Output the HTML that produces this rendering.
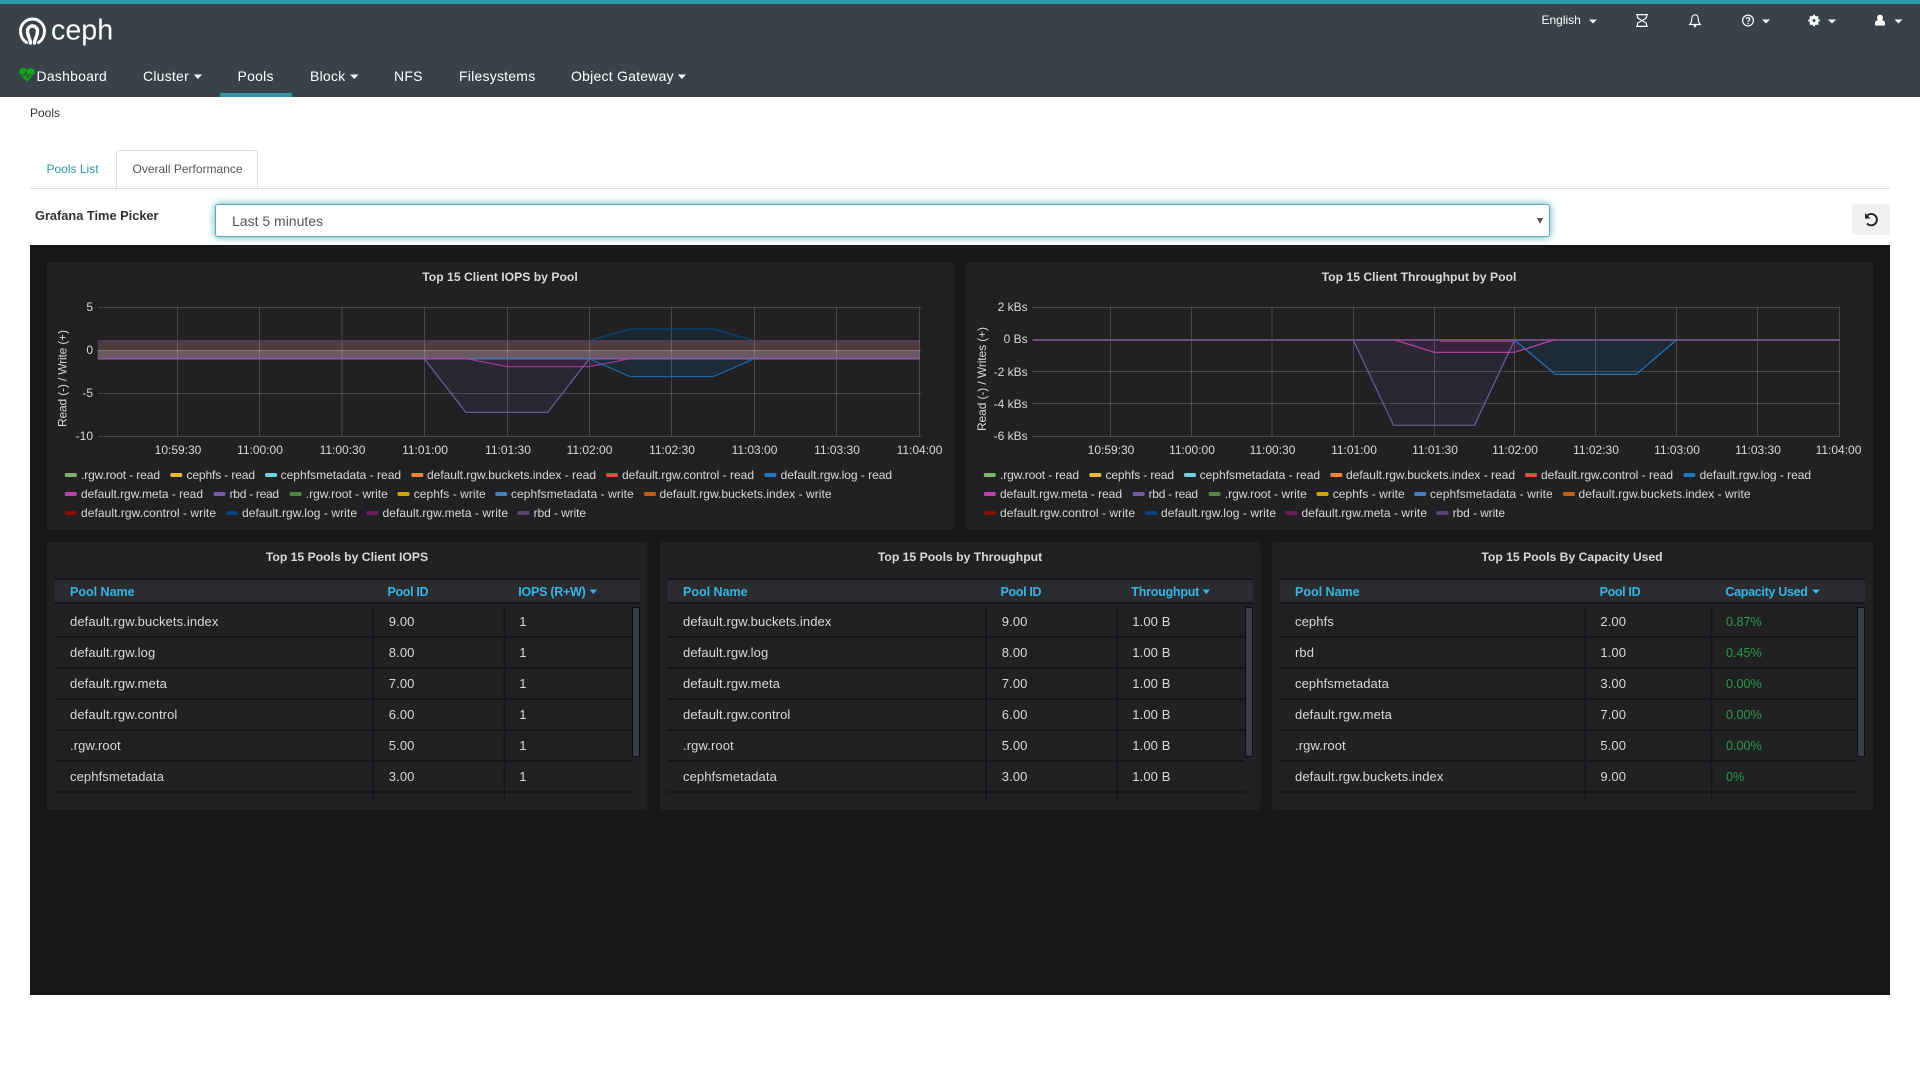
<!DOCTYPE html>
<html lang="en">
<head>
<meta charset="utf-8">
<title>Ceph Pools</title>
<style>
html,body{margin:0;padding:0;width:1920px;height:1080px;overflow:hidden;background:#fff;font-family:"Liberation Sans",sans-serif;color:#333}
#top{position:absolute;left:0;top:0;width:1920px;height:93px;background:#374249;border-top:4px solid #2b99a8}
.n{position:absolute;top:66px;font-size:14px;line-height:20px;color:#fff;white-space:nowrap;letter-spacing:.23px}
#act{position:absolute;left:220px;top:93px;width:72px;height:4px;background:#2b99a8}
.t{position:absolute;white-space:nowrap}
#tab{position:absolute;left:116px;top:150px;width:142px;height:38px;box-sizing:border-box;border:1px solid #ddd;border-bottom:0;border-radius:3px 3px 0 0;background:#fff}
#tabline{position:absolute;left:30px;top:188px;width:1860px;height:1px;background:#ddd}
#sel{position:absolute;left:215px;top:204px;width:1335px;height:33px;box-sizing:border-box;border:1px solid #5fa9b5;border-radius:3px;background:#fff;box-shadow:0 0 8px rgba(43,153,168,.8);font-size:14px;color:#555;line-height:32px;padding-left:16px}
#btn{position:absolute;left:1852px;top:204px;width:38px;height:31px;background:#f0f0f0;border-radius:3px}
#dark{position:absolute;left:30px;top:245px;width:1860px;height:750px;background:#161719}
svg{position:absolute;left:0;top:0}
svg text{font-family:"Liberation Sans",sans-serif;fill:#d8d9da;font-size:12px}
svg .ttl{font-weight:700;text-anchor:middle;font-size:12.2px}
.xl text{text-anchor:middle}
.yl text{text-anchor:end}
svg .h text{font-weight:700;font-size:12.5px;fill:#33b5e5}
svg .r text{font-size:13px;letter-spacing:.1px}
svg .g text{fill:#299c46;font-size:12.6px;letter-spacing:0}
</style>
</head>
<body>
<div id="top"></div>
<div class="n" style="left:36.5px">Dashboard</div>
<div class="n" style="left:143px">Cluster</div>
<div class="n" style="left:237.5px">Pools</div>
<div id="act"></div>
<div class="n" style="left:310px">Block</div>
<div class="n" style="left:394px">NFS</div>
<div class="n" style="left:459px">Filesystems</div>
<div class="n" style="left:571px">Object Gateway</div>
<div class="t" style="left:1541.5px;top:13px;font-size:12px;line-height:14px;color:#fff">English</div>
<div class="t" style="left:30px;top:106px;font-size:12px;line-height:14px;color:#333">Pools</div>
<div id="tab"></div>
<div id="tabline"></div>
<div class="t" style="left:46.5px;top:162px;font-size:12px;line-height:14px;color:#2b99a8">Pools List</div>
<div class="t" style="left:132.5px;top:162px;font-size:12px;line-height:14px;color:#555">Overall Performance</div>
<div class="t" style="left:35px;top:209px;font-size:12.8px;line-height:14px;font-weight:700;color:#333">Grafana Time Picker</div>
<div id="sel">Last 5 minutes</div>
<div id="btn"></div>
<div id="dark"></div>

<svg width="1920" height="1080" viewBox="0 0 1920 1080">
<!-- logo -->
<g fill="none" stroke="#fff" stroke-linecap="round">
<path stroke-width="2.9" d="M26.5 42.5C22.5 40 20.5 35.5 20.5 31A12 12 0 0 1 44.5 31C44.500 35.5 42.5 40 38.5 42.5"/>
<path stroke-width="3.4" d="M30.5 43C30.5 39 27.500 36.500 27.500 31A5 5 0 0 1 37.500 31C37.500 36.500 34.500 39 34.500 43"/>
</g>
<text x="51" y="39.5" style="font-size:28.700px;fill:#fff">ceph</text>
<!-- heart -->
<path d="M27 81.5L20.5 75C18.5 73 18.8 70 21 68.8C23 67.7 25.7 68 27 70.3C28.3 68 31 67.7 33 68.8C35.2 70 35.500 73 33.500 75Z" fill="#12a51d"/>
<path d="M20 75H24.5L26 72L27.500 77.500L29 75H34" fill="none" stroke="#374249" stroke-width="1"/>
<!-- nav carets -->
<g fill="#fff">
<polygon points="193.800,74.500 202,74.500 197.900,79"/>
<polygon points="350,74.500 358.500,74.500 354.250,79"/>
<polygon points="677.800,74.500 686,74.500 681.900,79"/>
<polygon points="1589,19.500 1597,19.500 1593,23.500"/>
<polygon points="1762,19.500 1770,19.500 1766,23.500"/>
<polygon points="1828,19.500 1836,19.500 1832,23.500"/>
<polygon points="1894.500,19.500 1902.500,19.500 1898.500,23.500"/>
</g>
<!-- hourglass -->
<g fill="none" stroke="#fff" stroke-width="1.2">
<path d="M1636 14.600H1648M1636 26.400H1648M1637.500 15V17C1637.500 19 1641.500 19.500 1641.500 20.500C1641.500 21.500 1637.500 22 1637.500 24V26M1646.500 15V17C1646.500 19 1642.500 19.500 1642.500 20.500C1642.500 21.500 1646.500 22 1646.500 24V26"/>
<!-- bell -->
<path d="M1689.700 24.500C1691.500 22.500 1691.700 21 1691.700 19C1691.700 16.500 1693 14.800 1695 14.800C1697 14.800 1698.300 16.500 1698.300 19C1698.300 21 1698.500 22.500 1700.300 24.500Z"/>
<!-- question -->
<circle cx="1748" cy="20.500" r="5.400"/>
<path d="M1746.200 19C1746.500 17.300 1749.800 17.300 1749.800 19.200C1749.800 20.500 1748 20.500 1748 22"/>
</g>
<circle cx="1695" cy="26" r="1.300" fill="#fff"/>
<circle cx="1748" cy="23.500" r=".8" fill="#fff"/>
<!-- gear -->
<circle cx="1814" cy="20.500" r="4.700" fill="#fff"/>
<g stroke="#fff" stroke-width="2"><path d="M1814 14.800V26.200M1808.300 20.500H1819.700M1810 16.500L1818 24.500M1818 16.500L1810 24.500"/></g>
<circle cx="1814" cy="20.500" r="1.500" fill="#374249"/>
<!-- user -->
<circle cx="1880" cy="17.800" r="3" fill="#fff"/>
<path d="M1875 25.500V23.500C1875 21.300 1876.500 20.300 1878 20.300H1882C1883.500 20.300 1885 21.300 1885 23.500V25.500Z" fill="#fff"/>
<!-- select arrow -->
<polygon points="1537,218 1543,218 1540,224" fill="#555"/>
<!-- reset -->
<path d="M1867.500 215.300A5.700 5.700 0 1 1 1867 223.500" fill="none" stroke="#222" stroke-width="1.900"/>
<polygon points="1865,213 1870.500,218.500 1865,218.500" fill="#222"/>

<!-- panels -->
<g fill="#212124">
<rect x="47" y="262" width="907" height="268" rx="3"/>
<rect x="966" y="262" width="907" height="268" rx="3"/>
<rect x="47" y="542" width="600.500" height="268" rx="3"/>
<rect x="660" y="542" width="600.500" height="268" rx="3"/>
<rect x="1272" y="542" width="601" height="268" rx="3"/>
</g>

<!-- CHART 1 -->
<text class="ttl" x="500" y="281">Top 15 Client IOPS by Pool</text>
<polygon points="424.300,358.700 465.700,412.300 547.700,412.300 589.300,358.700" fill="#2a2733"/>
<polygon points="466.700,358.700 507.300,366.700 589.300,366.700 630.300,358.700" fill="#37233c"/>
<polygon points="589.300,358.700 630,376.700 713.300,376.700 754.300,358.700" fill="#1f2a38"/>
<polygon points="589.300,340.700 630,329 713.300,329 754.300,340.700" fill="#1a2530"/>
<rect x="97.700" y="341" width="822" height="9" fill="#4d3c3e"/>
<rect x="97.700" y="350" width="822" height="8.700" fill="#6a5860"/>
<g fill="none" stroke="rgba(255,255,255,.17)" stroke-width="1">
<path d="M97.700 307.500H921.500M97.700 350.500H921.500M97.700 393.500H921.500M97.700 436.500H921.500"/>
<path d="M177.500 307V436M259.500 307V436M342 307V436M424.500 307V436M507.500 307V436M589.500 307V436M671.500 307V436M754.500 307V436M836.500 307V436M919.500 307V436"/>
</g>
<polyline points="589.300,340.700 630,329 713.300,329 754.300,340.700" fill="none" stroke="#0a437c" stroke-width="1.200"/>
<path d="M97.700 341H919.700" stroke="#5a4060" stroke-width="1.500"/>
<path d="M97.700 358.700H919.700" stroke="#8a5ba8" stroke-width="1.600"/>
<path d="M466 358.700H589" stroke="#3f78b8" stroke-width="1.600"/>
<polyline points="424.300,358.700 465.700,412.300 547.700,412.300 589.300,358.700" fill="none" stroke="#705da0" stroke-width="1.200"/>
<polyline points="424.300,358.700 466.700,358.700 507.300,366.700 589.300,366.700 630.300,358.700" fill="none" stroke="#ba43a9" stroke-width="1.200" opacity=".8"/>
<polyline points="589.300,358.700 630,376.700 713.300,376.700 754.300,358.700" fill="none" stroke="#1f78c1" stroke-width="1.200" opacity=".8"/>
<g class="yl">
<text x="93" y="311">5</text><text x="93" y="354">0</text><text x="93" y="397">-5</text><text x="93" y="440">-10</text>
</g>
<g class="xl">
<text x="178" y="454">10:59:30</text><text x="260" y="454">11:00:00</text><text x="342.500" y="454">11:00:30</text><text x="425" y="454">11:01:00</text><text x="508" y="454">11:01:30</text><text x="589.500" y="454">11:02:00</text><text x="672" y="454">11:02:30</text><text x="754.500" y="454">11:03:00</text><text x="837" y="454">11:03:30</text><text x="919.500" y="454" >11:04:00</text>
</g>
<text transform="translate(66.500 427) rotate(-90)" textLength="97">Read (-) / Write (+)</text>
<g>
<rect x="64.800" y="473" width="12" height="4" rx="1.500" fill="#7eb26d"/><text x="81" y="479" textLength="79">.rgw.root - read</text>
<rect x="170.300" y="473" width="12" height="4" rx="1.500" fill="#eab839"/><text x="186.500" y="479" textLength="68.500">cephfs - read</text>
<rect x="265" y="473" width="12" height="4" rx="1.500" fill="#6ed0e0"/><text x="280.600" y="479" textLength="120.500">cephfsmetadata - read</text>
<rect x="411.300" y="473" width="12" height="4" rx="1.500" fill="#ef843c"/><text x="427" y="479" textLength="169">default.rgw.buckets.index - read</text>
<rect x="606" y="473" width="12" height="4" rx="1.500" fill="#e24d42"/><text x="622" y="479" textLength="132">default.rgw.control - read</text>
<rect x="764.400" y="473" width="12" height="4" rx="1.500" fill="#1f78c1"/><text x="780.600" y="479" textLength="111.500">default.rgw.log - read</text>
<rect x="64.800" y="492" width="12" height="4" rx="1.500" fill="#ba43a9"/><text x="81" y="498" textLength="122">default.rgw.meta - read</text>
<rect x="213.500" y="492" width="12" height="4" rx="1.500" fill="#705da0"/><text x="229.600" y="498" textLength="49.500">rbd - read</text>
<rect x="289.600" y="492" width="12" height="4" rx="1.500" fill="#508642"/><text x="305.800" y="498" textLength="82">.rgw.root - write</text>
<rect x="397.500" y="492" width="12" height="4" rx="1.500" fill="#cca300"/><text x="413.700" y="498" textLength="72">cephfs - write</text>
<rect x="495.200" y="492" width="12" height="4" rx="1.500" fill="#447ebc"/><text x="511" y="498" textLength="122.700">cephfsmetadata - write</text>
<rect x="644" y="492" width="12" height="4" rx="1.500" fill="#c15c17"/><text x="659.500" y="498" textLength="172">default.rgw.buckets.index - write</text>
<rect x="64.800" y="511" width="12" height="4" rx="1.500" fill="#890f02"/><text x="81" y="517" textLength="135">default.rgw.control - write</text>
<rect x="226" y="511" width="12" height="4" rx="1.500" fill="#0a437c"/><text x="242" y="517" textLength="115">default.rgw.log - write</text>
<rect x="366.300" y="511" width="12" height="4" rx="1.500" fill="#6d1f62"/><text x="382.500" y="517" textLength="125.500">default.rgw.meta - write</text>
<rect x="517.400" y="511" width="12" height="4" rx="1.500" fill="#584477"/><text x="533.600" y="517" textLength="52.500">rbd - write</text>
</g>

<!-- CHART 2 -->
<text class="ttl" x="1419" y="281">Top 15 Client Throughput by Pool</text>
<polygon points="1353.300,340 1393.500,425.300 1474.400,425.300 1514.600,340" fill="#2a2733"/>
<polygon points="1395,340 1434.200,352.300 1514.600,352.300 1553.500,340" fill="#37233c"/>
<polygon points="1514.600,340 1555.300,374.300 1636.300,374.300 1676.400,340" fill="#1f2a38"/>
<g fill="none" stroke="rgba(255,255,255,.17)" stroke-width="1">
<path d="M1032.500 307.500H1840.700M1032.500 339.500H1840.700M1032.500 371.500H1840.700M1032.500 403.500H1840.700M1032.500 436.500H1840.700"/>
<path d="M1110.500 307V436M1191.500 307V436M1272 307V436M1353.500 307V436M1434.500 307V436M1514.500 307V436M1595.500 307V436M1676.500 307V436M1757.500 307V436M1839.500 307V436"/>
</g>
<path d="M1032.500 340H1839.500" stroke="#6f4a7d" stroke-width="2"/>
<path d="M1440 341.500H1515" stroke="#c15c17" stroke-width="1" opacity=".6"/>
<polyline points="1353.300,340 1393.500,425.300 1474.400,425.300 1514.600,340" fill="none" stroke="#705da0" stroke-width="1.200"/>
<polyline points="1395,340 1434.200,352.300 1514.600,352.300 1553.500,340" fill="none" stroke="#ba43a9" stroke-width="1.200"/>
<polyline points="1514.600,340 1555.300,374.300 1636.300,374.300 1676.400,340" fill="none" stroke="#1f78c1" stroke-width="1.200"/>
<g class="yl">
<text x="1027.700" y="311">2 kBs</text><text x="1027.700" y="343">0 Bs</text><text x="1027.700" y="376">-2 kBs</text><text x="1027.700" y="408">-4 kBs</text><text x="1027.700" y="440">-6 kBs</text>
</g>
<g class="xl">
<text x="1111" y="454">10:59:30</text><text x="1192" y="454">11:00:00</text><text x="1272.500" y="454">11:00:30</text><text x="1354" y="454">11:01:00</text><text x="1435" y="454">11:01:30</text><text x="1515" y="454">11:02:00</text><text x="1596" y="454">11:02:30</text><text x="1677" y="454">11:03:00</text><text x="1758" y="454">11:03:30</text><text x="1838.500" y="454">11:04:00</text>
</g>
<text transform="translate(986 431) rotate(-90)" textLength="104">Read (-) / Writes (+)</text>
<g transform="translate(919 0)">
<rect x="64.800" y="473" width="12" height="4" rx="1.500" fill="#7eb26d"/><text x="81" y="479" textLength="79">.rgw.root - read</text>
<rect x="170.300" y="473" width="12" height="4" rx="1.500" fill="#eab839"/><text x="186.500" y="479" textLength="68.500">cephfs - read</text>
<rect x="265" y="473" width="12" height="4" rx="1.500" fill="#6ed0e0"/><text x="280.600" y="479" textLength="120.500">cephfsmetadata - read</text>
<rect x="411.300" y="473" width="12" height="4" rx="1.500" fill="#ef843c"/><text x="427" y="479" textLength="169">default.rgw.buckets.index - read</text>
<rect x="606" y="473" width="12" height="4" rx="1.500" fill="#e24d42"/><text x="622" y="479" textLength="132">default.rgw.control - read</text>
<rect x="764.400" y="473" width="12" height="4" rx="1.500" fill="#1f78c1"/><text x="780.600" y="479" textLength="111.500">default.rgw.log - read</text>
<rect x="64.800" y="492" width="12" height="4" rx="1.500" fill="#ba43a9"/><text x="81" y="498" textLength="122">default.rgw.meta - read</text>
<rect x="213.500" y="492" width="12" height="4" rx="1.500" fill="#705da0"/><text x="229.600" y="498" textLength="49.500">rbd - read</text>
<rect x="289.600" y="492" width="12" height="4" rx="1.500" fill="#508642"/><text x="305.800" y="498" textLength="82">.rgw.root - write</text>
<rect x="397.500" y="492" width="12" height="4" rx="1.500" fill="#cca300"/><text x="413.700" y="498" textLength="72">cephfs - write</text>
<rect x="495.200" y="492" width="12" height="4" rx="1.500" fill="#447ebc"/><text x="511" y="498" textLength="122.700">cephfsmetadata - write</text>
<rect x="644" y="492" width="12" height="4" rx="1.500" fill="#c15c17"/><text x="659.500" y="498" textLength="172">default.rgw.buckets.index - write</text>
<rect x="64.800" y="511" width="12" height="4" rx="1.500" fill="#890f02"/><text x="81" y="517" textLength="135">default.rgw.control - write</text>
<rect x="226" y="511" width="12" height="4" rx="1.500" fill="#0a437c"/><text x="242" y="517" textLength="115">default.rgw.log - write</text>
<rect x="366.300" y="511" width="12" height="4" rx="1.500" fill="#6d1f62"/><text x="382.500" y="517" textLength="125.500">default.rgw.meta - write</text>
<rect x="517.400" y="511" width="12" height="4" rx="1.500" fill="#584477"/><text x="533.600" y="517" textLength="52.500">rbd - write</text>
</g>

<!-- TABLE 1 -->
<g>
<text class="ttl" x="347" y="561">Top 15 Pools by Client IOPS</text>
<rect x="54.500" y="578" width="585.500" height="26" fill="#141619"/><rect x="54.500" y="580" width="585.500" height="22" fill="#2b2c2f"/>
<g class="h"><text x="70" y="596">Pool Name</text><text x="387.500" y="596" textLength="41">Pool ID</text><text x="518.300" y="596" textLength="67.500">IOPS (R+W)</text></g>
<polygon points="589.500,589.500 597,589.500 593.250,594" fill="#33b5e5"/>
<g fill="#141619">
<rect x="54.500" y="636" width="577.500" height="2"/><rect x="54.500" y="667" width="577.500" height="2"/><rect x="54.500" y="698" width="577.500" height="2"/><rect x="54.500" y="729" width="577.500" height="2"/><rect x="54.500" y="760" width="577.500" height="2"/><rect x="54.500" y="791" width="577.500" height="2"/>
<rect x="372" y="607" width="2" height="193"/><rect x="503.500" y="607" width="2" height="193"/>
</g>
<rect x="632.500" y="607.500" width="7" height="149" fill="#3b3d45" stroke="#0d0d0f"/>
<g class="r">
<text x="70" y="626">default.rgw.buckets.index</text><text x="388.800" y="626">9.00</text><text x="519.300" y="626">1</text>
<text x="70" y="657">default.rgw.log</text><text x="388.800" y="657">8.00</text><text x="519.300" y="657">1</text>
<text x="70" y="688">default.rgw.meta</text><text x="388.800" y="688">7.00</text><text x="519.300" y="688">1</text>
<text x="70" y="719">default.rgw.control</text><text x="388.800" y="719">6.00</text><text x="519.300" y="719">1</text>
<text x="70" y="750">.rgw.root</text><text x="388.800" y="750">5.00</text><text x="519.300" y="750">1</text>
<text x="70" y="781">cephfsmetadata</text><text x="388.800" y="781">3.00</text><text x="519.300" y="781">1</text>
</g>
</g>

<!-- TABLE 2 -->
<g transform="translate(613 0)">
<text class="ttl" x="347" y="561">Top 15 Pools by Throughput</text>
<rect x="54.500" y="578" width="585.500" height="26" fill="#141619"/><rect x="54.500" y="580" width="585.500" height="22" fill="#2b2c2f"/>
<g class="h"><text x="70" y="596">Pool Name</text><text x="387.500" y="596" textLength="41">Pool ID</text><text x="518.300" y="596" textLength="68">Throughput</text></g>
<polygon points="589.500,589.500 597,589.500 593.250,594" fill="#33b5e5"/>
<g fill="#141619">
<rect x="54.500" y="636" width="577.500" height="2"/><rect x="54.500" y="667" width="577.500" height="2"/><rect x="54.500" y="698" width="577.500" height="2"/><rect x="54.500" y="729" width="577.500" height="2"/><rect x="54.500" y="760" width="577.500" height="2"/><rect x="54.500" y="791" width="577.500" height="2"/>
<rect x="372" y="607" width="2" height="193"/><rect x="503.500" y="607" width="2" height="193"/>
</g>
<rect x="632.500" y="607.500" width="7" height="149" fill="#3b3d45" stroke="#0d0d0f"/>
<g class="r">
<text x="70" y="626">default.rgw.buckets.index</text><text x="388.800" y="626">9.00</text><text x="519.300" y="626">1.00 B</text>
<text x="70" y="657">default.rgw.log</text><text x="388.800" y="657">8.00</text><text x="519.300" y="657">1.00 B</text>
<text x="70" y="688">default.rgw.meta</text><text x="388.800" y="688">7.00</text><text x="519.300" y="688">1.00 B</text>
<text x="70" y="719">default.rgw.control</text><text x="388.800" y="719">6.00</text><text x="519.300" y="719">1.00 B</text>
<text x="70" y="750">.rgw.root</text><text x="388.800" y="750">5.00</text><text x="519.300" y="750">1.00 B</text>
<text x="70" y="781">cephfsmetadata</text><text x="388.800" y="781">3.00</text><text x="519.300" y="781">1.00 B</text>
</g>
</g>

<!-- TABLE 3 -->
<g>
<text class="ttl" x="1572" y="561">Top 15 Pools By Capacity Used</text>
<rect x="1280" y="578" width="585" height="26" fill="#141619"/><rect x="1280" y="580" width="585" height="22" fill="#2b2c2f"/>
<g class="h"><text x="1295" y="596">Pool Name</text><text x="1599.600" y="596" textLength="41">Pool ID</text><text x="1725.400" y="596" textLength="82.500">Capacity Used</text></g>
<polygon points="1812,589.500 1820,589.500 1816,594" fill="#33b5e5"/>
<g fill="#141619">
<rect x="1280" y="636" width="577" height="2"/><rect x="1280" y="667" width="577" height="2"/><rect x="1280" y="698" width="577" height="2"/><rect x="1280" y="729" width="577" height="2"/><rect x="1280" y="760" width="577" height="2"/><rect x="1280" y="791" width="577" height="2"/>
<rect x="1584.500" y="607" width="2" height="193"/><rect x="1710.500" y="607" width="2" height="193"/>
</g>
<rect x="1857.500" y="607.500" width="7" height="149" fill="#3b3d45" stroke="#0d0d0f"/>
<g class="r">
<text x="1295" y="626">cephfs</text><text x="1600.400" y="626">2.00</text>
<text x="1295" y="657">rbd</text><text x="1600.400" y="657">1.00</text>
<text x="1295" y="688">cephfsmetadata</text><text x="1600.400" y="688">3.00</text>
<text x="1295" y="719">default.rgw.meta</text><text x="1600.400" y="719">7.00</text>
<text x="1295" y="750">.rgw.root</text><text x="1600.400" y="750">5.00</text>
<text x="1295" y="781">default.rgw.buckets.index</text><text x="1600.400" y="781">9.00</text>
</g>
<g class="r g">
<text x="1726" y="626">0.87%</text><text x="1726" y="657">0.45%</text><text x="1726" y="688">0.00%</text><text x="1726" y="719">0.00%</text><text x="1726" y="750">0.00%</text><text x="1726" y="781">0%</text>
</g>
</g>
</svg>
</body>
</html>
